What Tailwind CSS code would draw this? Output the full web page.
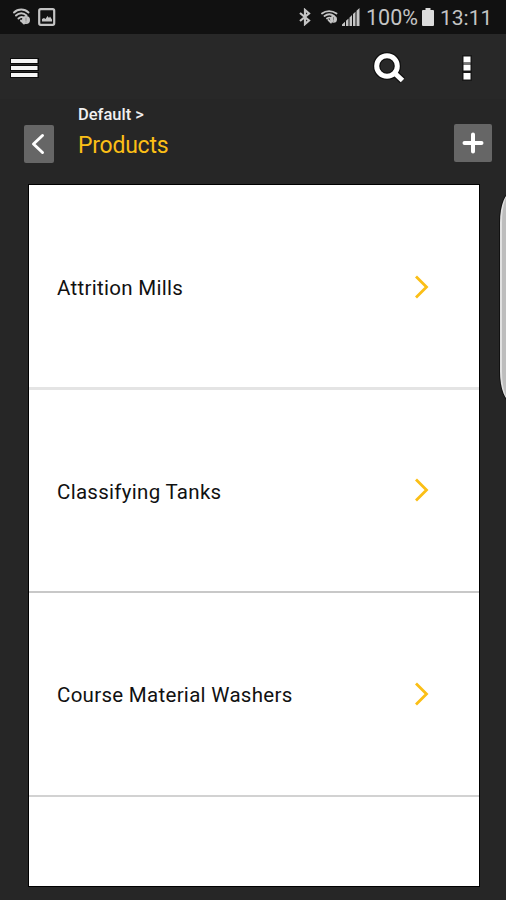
<!DOCTYPE html>
<html lang="en">
<head>
    <meta charset="UTF-8">
    <meta name="viewport" content="width=device-width, initial-scale=1.0">
    <title>Products</title>
    <script src="https://cdn.jsdelivr.net/npm/@tailwindcss/browser@4"></script>
</head>
<body class="bg-[#262626] font-[Roboto,sans-serif]">
    <div class="relative flex flex-col w-[506px] h-[900px] overflow-hidden bg-[#262626]">
        <!-- Status bar -->
        <div class="flex items-center h-[34px] shrink-0 bg-[#111111] text-[#c4c4c4]">
            <svg class="w-[18px] h-[18px] ml-[13px]" viewBox="0 0 18 18" fill="none" stroke="currentColor" stroke-width="1.9" stroke-linecap="round">
                <path d="M1 4.500C5 .5 11.500 .5 15.500 4.500M3 7.500C6 4.500 10.500 4.500 13.500 7.500M5.500 10.500C7.500 8.700 9 8.700 10.500 9.500" />
                <circle cx="13" cy="12" r="4" fill="currentColor" stroke="none" />
                <path d="M8 12.500L11 15.500" />
                <path d="M13 10v2.500M13 14v.1" stroke="#888" stroke-width="1" />
            </svg>
            <svg class="w-[18px] h-[18px] ml-[7px]" viewBox="0 0 18 18" fill="none">
                <rect x="1.200" y="1.200" width="15" height="15.600" rx="1.500" stroke="currentColor" stroke-width="2.200" />
                <path d="M4 13.500V11l2-1 1.500 1L9.500 8l1.500 2 1-1.500 2 3v2z" fill="currentColor" />
            </svg>
            <svg class="w-[12px] h-[18px] ml-[243px]" viewBox="0 0 12 18" fill="none" stroke="currentColor" stroke-width="2.200">
                <path d="M1 5l9 7.500L6 16V2l4 3.500L1 13" />
            </svg>
            <svg class="w-[17px] h-[14px] ml-[10px]" viewBox="0 0 17 14" fill="none" stroke="currentColor" stroke-width="1.800" stroke-linecap="round">
                <path d="M1 3.500C5 .3 11 .3 15.500 3.500M3.500 6C6.500 3.800 10 3.800 13 6M6 8.500C7.500 7.500 9 7.500 10 8" />
                <circle cx="12.500" cy="9.300" r="3.500" fill="currentColor" stroke="none" />
                <path d="M7.500 10L10 12.500" />
                <path d="M12.500 7.500v2M12.500 11v.1" stroke="#777" stroke-width="1" />
            </svg>
            <svg class="w-[18px] h-[18px] ml-[4px]" viewBox="0 0 18 18" fill="currentColor">
                <path d="M0 18v-1.500l3-2.800V18zM4 18v-5.300l2.500-2.200V18zM7.500 18V9.500L10 7v11zM11 18V6l2.500-2.300V18zM14.500 18V2.800L17.500 0v18z" />
            </svg>
            <span class="w-[51px] ml-[6px] pt-[2px] text-[21.5px] leading-none whitespace-nowrap">100%</span>
            <svg class="w-[12px] h-[18px] ml-[5px]" viewBox="0 0 12 18" fill="#dcdcdc">
                <path d="M3.500 0h5v2H11q1 0 1 1v14q0 1-1 1H1q-1 0-1-1V3q0-1 1-1h2.500z" />
            </svg>
            <span class="ml-[6px] pt-[2px] text-[21px] leading-none whitespace-nowrap">13:11</span>
        </div>

        <!-- Toolbar -->
        <div class="flex items-center h-[65px] shrink-0 bg-[#282828]">
            <button class="ml-[9px] mt-[2px]" aria-label="Menu">
                <svg class="w-[30px] h-[24px]" viewBox="0 0 30 24">
                    <path d="M1 2h29v6H1zM1 9h29v6H1zM1 16h29v6H1z" fill="#0c0c0c" />
                    <path d="M2 3h26.500v4H2zM2 10h26.500v4H2zM2 17h26.500v4H2z" fill="#f5f5f5" />
                </svg>
            </button>
            <button class="ml-[333px] mt-[3px]" aria-label="Search">
                <svg class="w-[34px] h-[32px]" viewBox="0 0 34 32" fill="none">
                    <circle cx="15" cy="14" r="10.300" stroke="#111111" stroke-width="7.500" />
                    <path d="M22 20.500l8.500 8" stroke="#111111" stroke-width="7.500" />
                    <circle cx="15" cy="14" r="10.300" stroke="#ffffff" stroke-width="5" />
                    <path d="M22 20.500l8.500 8" stroke="#ffffff" stroke-width="5" />
                </svg>
            </button>
            <button class="ml-[56px] mt-[2px]" aria-label="More options">
                <svg class="w-[10px] h-[26px]" viewBox="0 0 10 26">
                    <path d="M0 0h10v26H0z" fill="#181818" />
                    <path d="M1.500 1.500h7v6h-7zM1.500 10h7v5.500h-7zM1.500 18h7v6.500h-7z" fill="#ffffff" />
                    <path d="M1.500 7.500h7V10h-7z" fill="#777777" />
                </svg>
            </button>
        </div>

        <!-- Breadcrumb -->
        <div class="flex h-[85px] shrink-0">
            <button class="flex items-center justify-center w-[30px] h-[38px] mt-[26px] ml-[24px] rounded-[2px] bg-[#666666]" aria-label="Back">
                <svg class="w-[14px] h-[22px] mr-[2px]" viewBox="0 0 14 22" fill="none" stroke="#ffffff" stroke-width="3" stroke-linecap="round" stroke-linejoin="round">
                    <path d="M11.500 2.500L2.500 11l9 8.500" />
                </svg>
            </button>
            <div class="flex flex-col w-[400px] pl-[24px] pt-[6px]">
                <span class="text-[16.5px] leading-[20px] text-[#f0f0f0] font-medium">Default &gt;</span>
                <h1 class="mt-[7px] text-[23px] leading-[28px] text-[#fbbf16] tracking-[-0.25px]">Products</h1>
            </div>
            <button class="flex items-center justify-center w-[38px] h-[38px] mt-[25px] rounded-[2px] bg-[#666666]" aria-label="Add">
                <svg class="w-[22px] h-[22px]" viewBox="0 0 22 22" stroke="#ffffff" stroke-width="4" stroke-linecap="round">
                    <path d="M11 2.500v17M2.500 11h17" />
                </svg>
            </button>
        </div>

        <!-- Product list -->
        <ul class="flex flex-col w-[452px] h-[703px] ml-[27.500px] shrink-0 border-[1.5px] border-black bg-white text-[20.5px] tracking-[0.29px] text-[#111111] overflow-hidden">
            <li class="flex items-center justify-between h-[204.500px] shrink-0 pl-[28.500px] pr-[49.500px] border-b-[3px] border-[#e4e4e4]">
                <span class="pt-[5px]">Attrition Mills</span>
                <svg class="w-[15px] h-[24px] mt-[3px]" viewBox="0 0 15 24" fill="none" stroke="#fbbf16" stroke-width="2.800"><path d="M2 1.500L12.500 12 2 22.500" /></svg>
            </li>
            <li class="flex items-center justify-between h-[203px] shrink-0 pl-[28.500px] pr-[49.500px] border-b-2 border-[#c8c8c8]">
                <span class="pt-[4px]">Classifying Tanks</span>
                <svg class="w-[15px] h-[24px]" viewBox="0 0 15 24" fill="none" stroke="#fbbf16" stroke-width="2.800"><path d="M2 1.500L12.500 12 2 22.500" /></svg>
            </li>
            <li class="flex items-center justify-between h-[204px] shrink-0 pl-[28.500px] pr-[49.500px] border-b-2 border-[#d2d2d2]">
                <span class="pt-[3px]">Course Material Washers</span>
                <svg class="w-[15px] h-[24px]" viewBox="0 0 15 24" fill="none" stroke="#fbbf16" stroke-width="2.800"><path d="M2 1.500L12.500 12 2 22.500" /></svg>
            </li>
        </ul>

        <!-- Edge panel handle -->
        <div class="absolute top-[192px] left-[500px] w-[24px] h-[210px] rounded-[12px/30px] border-l-2 border-[#e0e0e0] bg-[#bdbdbd] shadow-[0_0_0_1px_#111111]"></div>
    </div>
</body>
</html>
